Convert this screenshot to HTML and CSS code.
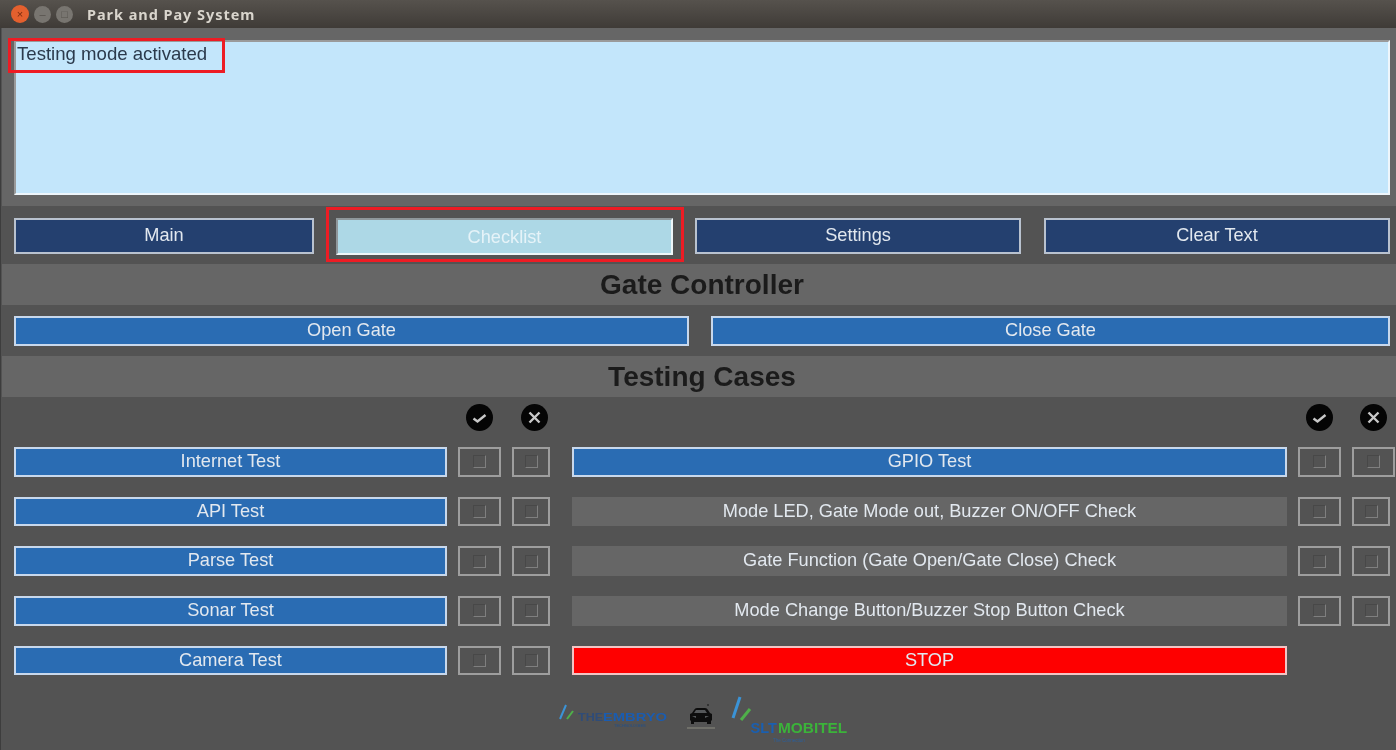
FILE: index.html
```html
<!DOCTYPE html>
<html lang="en">
<head>
  <meta charset="UTF-8">
  <meta name="viewport" content="width=device-width, initial-scale=1.0">
  <title>Park and Pay System</title>
  <link rel="stylesheet" href="styles.css">
</head>
<body>
  <div class="window">
    <header class="titlebar">
      <span class="light light-close">&#215;</span>
      <span class="light light-min">&#8211;</span>
      <span class="light light-max">&#9633;</span>
      <span class="title">Park and Pay System</span>
    </header>

    <section class="log-area">
      <div class="log">Testing mode activated</div>
    </section>

    <nav class="nav">
      <button class="btn btn-nav btn-main">Main</button>
      <button class="btn btn-active btn-checklist">Checklist</button>
      <button class="btn btn-nav btn-settings">Settings</button>
      <button class="btn btn-nav btn-clear">Clear Text</button>
    </nav>

    <h2 class="section-head">Gate Controller</h2>
    <div class="gate-row">
      <button class="btn btn-blue btn-open">Open Gate</button>
      <button class="btn btn-blue btn-close">Close Gate</button>
    </div>

    <h2 class="section-head">Testing Cases</h2>
    <div class="cases">
      <div class="case-row icon-row">
        <div class="group-left">
          <div class="cell-main"></div>
          <div class="cell-a"><svg class="mark" viewBox="0 0 27 27"><circle cx="13.5" cy="13.5" r="13.5"/><path d="M7.5 14.5l4 3 8-6.5"/></svg></div>
          <div class="cell-b cell-x"><svg class="mark" viewBox="0 0 27 27"><circle cx="13.5" cy="13.5" r="13.5"/><path d="M8.5 8.5l10 10M18.5 8.5l-10 10"/></svg></div>
        </div>
        <div class="group-right">
          <div class="cell-wide"></div>
          <div class="cell-a"><svg class="mark" viewBox="0 0 27 27"><circle cx="13.5" cy="13.5" r="13.5"/><path d="M7.5 14.5l4 3 8-6.5"/></svg></div>
          <div class="cell-c"><svg class="mark" viewBox="0 0 27 27"><circle cx="13.5" cy="13.5" r="13.5"/><path d="M8.5 8.5l10 10M18.5 8.5l-10 10"/></svg></div>
        </div>
      </div>

      <div class="case-row">
        <div class="group-left">
          <button class="btn btn-blue cell-main">Internet Test</button>
          <label class="check cell-a"><i></i></label>
          <label class="check cell-b"><i></i></label>
        </div>
        <div class="group-right">
          <button class="btn btn-blue cell-wide">GPIO Test</button>
          <label class="check cell-a"><i></i></label>
          <label class="check cell-c"><i></i></label>
        </div>
      </div>

      <div class="case-row">
        <div class="group-left">
          <button class="btn btn-blue cell-main">API Test</button>
          <label class="check cell-a"><i></i></label>
          <label class="check cell-b"><i></i></label>
        </div>
        <div class="group-right">
          <button class="btn btn-grey cell-wide">Mode LED, Gate Mode out, Buzzer ON/OFF Check</button>
          <label class="check cell-a"><i></i></label>
          <label class="check cell-b"><i></i></label>
        </div>
      </div>

      <div class="case-row">
        <div class="group-left">
          <button class="btn btn-blue cell-main">Parse Test</button>
          <label class="check cell-a"><i></i></label>
          <label class="check cell-b"><i></i></label>
        </div>
        <div class="group-right">
          <button class="btn btn-grey cell-wide">Gate Function (Gate Open/Gate Close) Check</button>
          <label class="check cell-a"><i></i></label>
          <label class="check cell-b"><i></i></label>
        </div>
      </div>

      <div class="case-row">
        <div class="group-left">
          <button class="btn btn-blue cell-main">Sonar Test</button>
          <label class="check cell-a"><i></i></label>
          <label class="check cell-b"><i></i></label>
        </div>
        <div class="group-right">
          <button class="btn btn-grey cell-wide">Mode Change Button/Buzzer Stop Button Check</button>
          <label class="check cell-a"><i></i></label>
          <label class="check cell-b"><i></i></label>
        </div>
      </div>

      <div class="case-row">
        <div class="group-left">
          <button class="btn btn-blue cell-main">Camera Test</button>
          <label class="check cell-a"><i></i></label>
          <label class="check cell-b"><i></i></label>
        </div>
        <div class="group-right">
          <button class="btn btn-red cell-wide">STOP</button>
        </div>
      </div>
    </div>

    <footer class="logos">
      <svg class="logo-strip" viewBox="0 0 300 52" width="300" height="52">
        <path class="slash-blue thin" d="M10 11L4 25"/>
        <path class="slash-green thin" d="M17 17L11 25"/>
        <text class="embryo embryo-the" x="22" y="27" textLength="25" lengthAdjust="spacingAndGlyphs">THE</text>
        <text class="embryo" x="47" y="27" textLength="64" lengthAdjust="spacingAndGlyphs">EMBRYO</text>
        <text class="embryo-sub" x="58" y="33">TECHNOLOGIES</text>
        <circle class="car" cx="152" cy="11" r="0.8"/>
        <path class="car" d="M135 30v-3l-1-1v-6l2-1 2-3q1-2 3-2h8q2 0 3 2l2 3 2 1v6l-1 1v3h-4v-2h-13v2z"/>
        <path class="car-glass" d="M138 19l2-3h9l2 3zM136 22l4 2v-2zM153 22l-4 2v-2z"/>
        <path class="car-line" d="M131 34h28"/>
        <path class="slash-blue" d="M184 3l-7 21"/>
        <path class="slash-green" d="M194 15l-9 11"/>
        <text class="slt slt-blue" x="194.5" y="39">SLT</text>
        <text class="slt slt-green" x="222" y="39">MOBITEL</text>
        <text class="slt-sub" x="217" y="48">The Connection</text>
      </svg>
    </footer>

    <div class="mark-box mark-log"></div>
    <div class="mark-box mark-tab"></div>
  </div>
</body>
</html>
```

FILE: styles.css
```css
html, body {
  margin: 0;
  padding: 0;
}

body {
  font-family: "Liberation Sans", Arial, sans-serif;
  background: #535353;
}

/* the source is a soft, scaled-up photo of the screen */
.window {
  position: relative;
  width: 1396px;
  height: 750px;
  overflow: hidden;
  background: #535353;
  box-shadow: inset 1px 0 0 #3d3d3d;
  filter: blur(0.45px);
}

/* title bar */
.titlebar {
  display: flex;
  align-items: center;
  height: 28px;
  padding-left: 11px;
  box-sizing: border-box;
  background: linear-gradient(#56524d, #3f3b37);
}

.light {
  display: flex;
  align-items: center;
  justify-content: center;
  width: 17px;
  height: 17px;
  margin-right: 5px;
  border-radius: 50%;
  font-size: 11px;
  line-height: 1;
  color: #56524d;
  background: #787570;
}

.light-close {
  width: 18px;
  height: 18px;
  background: #e4602e;
  color: #7a2c10;
}

.title {
  margin-left: 9px;
  font-family: "Noto Sans", sans-serif;
  font-size: 14.5px;
  font-weight: 700;
  letter-spacing: 0.95px;
  color: #d9d5cd;
}

/* log */
.log-area {
  height: 178px;
  margin-left: 2px;
  padding: 12px 6px 11px 12px;
  box-sizing: border-box;
  background: #666;
}

.log {
  height: 155px;
  padding: 1px 1px;
  box-sizing: border-box;
  font-size: 18.6px;
  line-height: 21px;
  color: #2b3a4c;
  background: #c3e6fb;
  border: 2px solid #eef6fb;
  border-top-color: #9a9a9a;
  border-left-color: #9a9a9a;
}

/* buttons */
.btn {
  display: block;
  margin: 0;
  padding: 0 0 1px;
  box-sizing: border-box;
  font-family: inherit;
  font-size: 18.2px;
  color: #e2e8ef;
  border: 2px solid #d4dce6;
}

.btn-nav {
  height: 36px;
  background: #24406f;
  border-color: #b9c2cf;
}

.btn-active {
  height: 37px;
  padding: 2px 0 0;
  color: #e6f3f8;
  background: #add8e6;
  border-color: #eef6f8;
  border-top-color: #8f979b;
  border-left-color: #8f979b;
}

.btn-blue {
  background: #2a6cb3;
  border-color: #c8d8ec;
}

.btn-grey {
  background: #666;
  border-color: #666;
}

.btn-red {
  background: #fe0000;
  border-color: #f1c4c4;
}

/* nav row */
.nav {
  display: flex;
  gap: 22px;
  height: 58px;
  padding: 12px 6px 0 14px;
  box-sizing: border-box;
}

.btn-main { width: 300px; }
.btn-checklist { width: 337px; }
.btn-settings { width: 326px; }
.btn-clear { width: 346px; margin-left: 1px; }

/* section headings */
.section-head {
  height: 41px;
  margin: 0 0 0 2px;
  padding-left: 6px;
  font-size: 28px;
  font-weight: 700;
  line-height: 41px;
  text-align: center;
  color: #1b1b1b;
  background: #666;
}

/* gate buttons */
.gate-row {
  display: flex;
  gap: 22px;
  height: 51px;
  padding: 11px 6px 0 14px;
  box-sizing: border-box;
}

.btn-open { width: 675px; }
.btn-close { width: 679px; }

.gate-row .btn {
  height: 30px;
}

/* test cases */
.cases {
  display: flex;
  flex-direction: column;
  gap: 20px;
  padding-left: 14px;
}

.case-row {
  display: flex;
  gap: 22px;
  height: 29.7px;
}

.icon-row {
  height: 40px;
  margin-bottom: -10px;
  align-items: center;
}

.group-left,
.group-right {
  display: flex;
  gap: 11px;
  height: 100%;
  align-items: stretch;
}

.cell-main { width: 433px; }
.cell-wide { width: 715px; }
.cell-a { width: 43px; }
.cell-b { width: 38px; }
.cell-c { width: 43px; }

.icon-row .cell-a,
.icon-row .cell-b,
.icon-row .cell-c {
  display: flex;
  align-items: center;
  justify-content: center;
}

.icon-row .cell-x {
  padding-left: 6px;
  box-sizing: border-box;
}

.mark {
  width: 27px;
  height: 27px;
  flex: none;
}

.mark circle {
  fill: #050505;
}

.mark path {
  fill: none;
  stroke: #c8c8c8;
  stroke-width: 2.4;
}

.check {
  display: flex;
  align-items: center;
  justify-content: center;
  box-sizing: border-box;
  border: 2px solid #9e9e9e;
}

.check i {
  display: block;
  width: 13px;
  height: 13px;
  box-sizing: border-box;
  border: 1px solid #7f7f7f;
  border-top-color: #484848;
  border-left-color: #484848;
}

/* logos */
.logos {
  display: flex;
  justify-content: center;
  padding: 19px 0 0 16px;
}

.logo-strip {
  filter: blur(0.5px);
}

.slash-blue,
.slash-green {
  fill: none;
  stroke-width: 3;
}

.slash-blue { stroke: #3b93d6; }
.slash-green { stroke: #4fb04a; }

.thin {
  stroke-width: 2;
}

.embryo {
  font-size: 11px;
  font-weight: 700;
  fill: #1a5cb0;
}

.embryo-the {
  fill: #2f4c78;
}

.embryo-sub {
  font-size: 4px;
  fill: #1f4f8c;
}

.car {
  fill: #0d0d0d;
}

.car-glass {
  fill: #55585a;
}

.car-line {
  stroke: #8c8c80;
  stroke-width: 1;
}

.slt {
  font-weight: 700;
}

.slt-blue {
  font-size: 14.5px;
  fill: #1a5fb0;
}

.slt-green {
  font-size: 15.4px;
  fill: #3bb33a;
}

.slt-sub {
  font-size: 4.5px;
  fill: #2a5f9c;
}

/* red annotation frames drawn on top of the screenshot */
.mark-box {
  position: absolute;
  box-sizing: border-box;
  border: 3px solid #ed1c24;
}

.mark-log {
  left: 8px;
  top: 38px;
  width: 217px;
  height: 35px;
}

.mark-tab {
  left: 326px;
  top: 207px;
  width: 358px;
  height: 55px;
}
```
